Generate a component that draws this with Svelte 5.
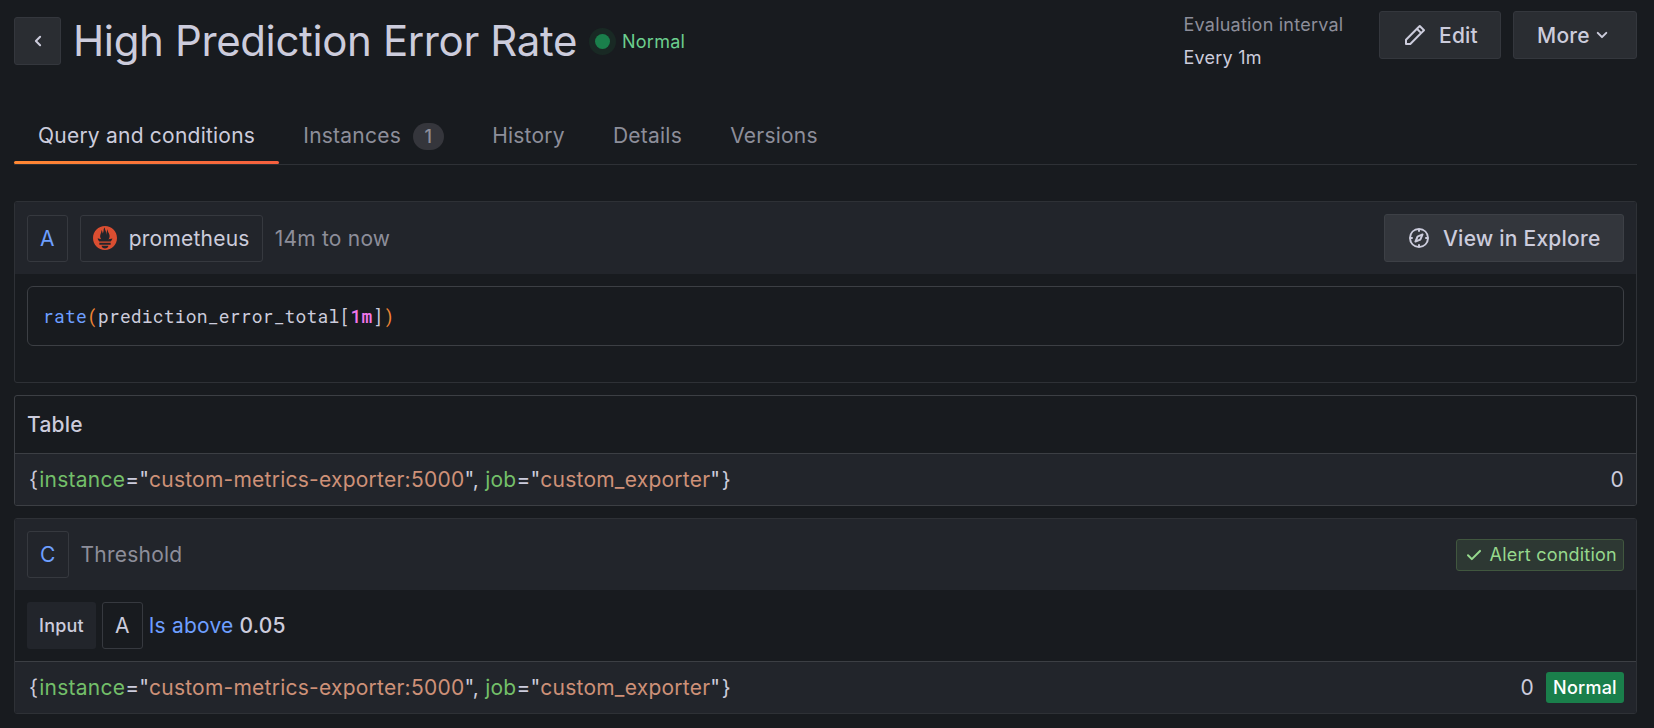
<script>
  const tabs = [
    { label: 'Query and conditions', active: true },
    { label: 'Instances', count: 1 },
    { label: 'History' },
    { label: 'Details' },
    { label: 'Versions' }
  ];
  const labels = [
    ['instance', 'custom-metrics-exporter:5000'],
    ['job', 'custom_exporter']
  ];
  const icons = {
    left: 'M11.29,12l3.54-3.54a1,1,0,0,0,0-1.41,1,1,0,0,0-1.42,0L9.17,11.29a1,1,0,0,0,0,1.42L13.41,17a1,1,0,0,0,.71.29,1,1,0,0,0,.71-.29,1,1,0,0,0,0-1.41Z',
    down: 'M17,9.17a1,1,0,0,0-1.41,0L12,12.71,8.46,9.17a1,1,0,0,0-1.41,0,1,1,0,0,0,0,1.42l4.24,4.24a1,1,0,0,0,1.42,0L17,10.59A1,1,0,0,0,17,9.17Z',
    pen: 'M22,7.24a1,1,0,0,0-.29-.71L17.47,2.29A1,1,0,0,0,16.76,2a1,1,0,0,0-.71.29L13.22,5.12h0L2.29,16.05a1,1,0,0,0-.29.71V21a1,1,0,0,0,1,1H7.24A1,1,0,0,0,8,21.71L18.87,10.78h0L21.71,8a1.19,1.19,0,0,0,.22-.33,1,1,0,0,0,0-.24.7.7,0,0,0,0-.14ZM6.83,20H4V17.17l9.93-9.93,2.83,2.83ZM18.17,8.66,15.34,5.83l1.42-1.41,2.82,2.82Z',
    check: 'M18.71,7.21a1,1,0,0,0-1.42,0L9.84,14.67,6.71,11.53A1,1,0,1,0,5.29,13l3.84,3.84a1,1,0,0,0,1.42,0l8.16-8.16A1,1,0,0,0,18.71,7.21Z',
    compass: 'M12,2A10,10,0,1,0,22,12,10,10,0,0,0,12,2Zm1,17.93V19a1,1,0,0,0-2,0v.93A8,8,0,0,1,4.07,13H5a1,1,0,0,0,0-2H4.07A8,8,0,0,1,11,4.07V5a1,1,0,0,0,2,0V4.07A8,8,0,0,1,19.93,11H19a1,1,0,0,0,0,2h.93A8,8,0,0,1,13,19.93ZM15.14,7.55l-5,2.12a1,1,0,0,0-.52.52l-2.12,5a1,1,0,0,0,.21,1.1,1,1,0,0,0,.7.3.93.93,0,0,0,.4-.09l5-2.12a1,1,0,0,0,.52-.52l2.12-5a1,1,0,0,0-1.31-1.31Zm-2.49,5.1-2.28,1,1-2.28,2.28-1Z',
    prometheus: 'M12 0C5.373 0 0 5.372 0 12c0 6.627 5.373 12 12 12s12-5.373 12-12c0-6.628-5.373-12-12-12zm0 22.46c-1.885 0-3.414-1.26-3.414-2.814h6.828c0 1.553-1.528 2.813-3.414 2.813zm5.64-3.745H6.36v-2.046h11.28v2.046zm-.04-3.098H6.391c-.037-.043-.075-.086-.111-.13-1.155-1.401-1.427-2.133-1.69-2.879-.005-.025 1.4.287 2.395.511 0 0 .513.119 1.262.255-.72-.843-1.147-1.915-1.147-3.01 0-2.406 1.845-4.508 1.18-6.207.648.053 1.34 1.367 1.387 3.422.689-.951.977-2.69.977-3.755 0-1.103.727-2.385 1.454-2.429-.648 1.069.168 1.984.894 4.256.272.854.237 2.29.447 3.201.07-1.892.395-4.652 1.595-5.605-.529 1.2.079 2.702.494 3.424.671 1.164 1.078 2.047 1.078 3.716a4.642 4.642 0 01-1.11 2.996c.792-.149 1.34-.283 1.34-.283l2.573-.502s-.374 1.538-1.81 3.019z'
  };
</script>

{#snippet icon(name)}
  <svg class="icon" viewBox="0 0 24 24" aria-hidden="true"><path d={icons[name]} /></svg>
{/snippet}

{#snippet series()}
  <div class="series"><span class="open">&#123;</span>{#each labels as [key, value], i}<span class="key">{key}</span><span>="</span><span class="val">{value}</span><span>"</span>{#if i < labels.length - 1}<span>{', '}</span>{/if}{/each}<span class="close">&#125;</span></div>
{/snippet}

<main>
  <header>
    <button class="btn back" aria-label="Back">{@render icon('left')}</button>
    <h1>High Prediction Error Rate</h1>
    <div class="state"><i></i>Normal</div>
    <dl>
      <dt>Evaluation interval</dt>
      <dd>Every 1m</dd>
    </dl>
    <button class="btn edit">{@render icon('pen')}<span>Edit</span></button>
    <button class="btn more"><span>More</span>{@render icon('down')}</button>
  </header>

  <nav>
    {#each tabs as tab}
      <a class:active={tab.active}>{tab.label}{#if tab.count}<span class="count">{tab.count}</span>{/if}</a>
    {/each}
  </nav>

  <section class="panel query">
    <div class="head">
      <span class="tag ref">A</span>
      <span class="tag source">{@render icon('prometheus')}prometheus</span>
      <span class="muted">14m to now</span>
      <button class="btn explore">{@render icon('compass')}<span>View in Explore</span></button>
    </div>
    <div class="editor"><code><span class="fn">rate</span><span class="paren">(</span>prediction_error_total[<span class="dur">1m</span>]<span class="paren">)</span></code></div>
  </section>

  <section class="panel table">
    <h2>Table</h2>
    <div class="row">{@render series()}<span class="num">0</span></div>
  </section>

  <section class="panel threshold">
    <div class="head">
      <span class="tag ref">C</span>
      <span class="muted">Threshold</span>
      <span class="condition">{@render icon('check')}Alert condition</span>
    </div>
    <div class="expr">
      <span class="input">Input</span>
      <span class="tag">A</span>
      <span class="op">Is above</span>
      <span class="limit">0.05</span>
    </div>
    <div class="row">{@render series()}<span class="num">0</span><span class="normal">Normal</span></div>
  </section>
</main>

<style>
  :global(body) {
    background: #181b1f;
  }
  main {
    box-sizing: border-box;
    height: 728px;
    padding: 11px 17px 0 14px;
    font: 21px/33px Inter, sans-serif;
    letter-spacing: 0.225px;
    color: #ccccdc;
    overflow: hidden;
  }
  main * {
    box-sizing: border-box;
  }
  .icon {
    width: 24px;
    height: 24px;
    flex: none;
    fill: currentColor;
  }
  header {
    display: flex;
    align-items: flex-start;
    height: 107px;
  }
  .btn {
    display: flex;
    align-items: center;
    height: 48px;
    padding: 0 23px;
    border: 1px solid #34373d;
    border-radius: 3px;
    background: #2a2d32;
    color: inherit;
    font: 500 21px/33px Inter, sans-serif;
    letter-spacing: 0.225px;
    white-space: nowrap;
  }
  .back {
    width: 47px;
    padding: 0;
    margin: 6px 12px 0 0;
    justify-content: center;
  }
  h1 {
    margin: 5px 0 0;
    font-size: 42px;
    line-height: 50px;
    font-weight: 400;
    letter-spacing: -0.37px;
    white-space: nowrap;
  }
  .state {
    display: flex;
    align-items: center;
    margin: 14px 0 0 18px;
    height: 33px;
    font-size: 18px;
    color: #6ccf8e;
  }
  .state i {
    width: 15px;
    height: 15px;
    margin-right: 12px;
    border-radius: 50%;
    background: #1a7f4b;
    box-shadow: 0 0 0 6px #192924;
  }
  dl {
    width: 160px;
    margin: -3px 35.5px 0 auto;
    font-size: 18px;
    white-space: nowrap;
  }
  dt {
    color: #8d8e9a;
  }
  dd {
    margin: 0;
  }
  .edit {
    width: 122px;
    gap: 12px;
  }
  .more {
    width: 124px;
    margin-left: 12px;
  }
  nav {
    display: flex;
    height: 47px;
    border-bottom: 1px solid #2e3136;
  }
  nav a {
    position: relative;
    display: flex;
    align-items: center;
    height: 35px;
    padding: 0 24.2px 0 24px;
    color: #8d8e9a;
    white-space: nowrap;
  }
  nav .active {
    color: #ccccdc;
  }
  nav .active::after {
    content: '';
    position: absolute;
    left: 0;
    right: 0;
    top: 43px;
    height: 3px;
    border-radius: 2px;
    background: linear-gradient(90deg, #ff8833, #f55f3e);
  }
  .count {
    width: 31px;
    height: 27px;
    margin: 1px 0 0 12px;
    border-radius: 14px;
    background: #35363c;
    font-size: 18px;
    font-weight: 500;
    line-height: 27px;
    text-align: center;
  }
  .panel {
    border: 1px solid #2e3136;
    border-radius: 3px;
    overflow: hidden;
  }
  .query {
    height: 182px;
    margin-top: 36px;
  }
  .head {
    display: flex;
    align-items: center;
    gap: 12px;
    height: 72px;
    padding: 0 12px;
    background: #22252b;
    white-space: nowrap;
  }
  .tag {
    display: flex;
    align-items: center;
    height: 47px;
    padding: 0 12px;
    border: 1px solid #36393f;
    border-radius: 3px;
  }
  .ref {
    color: #6e9fff;
  }
  .source .icon {
    margin-right: 12px;
    fill: #da4e31;
  }
  .muted {
    color: #8d8e9a;
  }
  .explore {
    width: 240px;
    margin-left: auto;
    padding-left: 22px;
    gap: 12px;
    background: #33363c;
    border-color: #3d4046;
  }
  .editor {
    display: flex;
    align-items: center;
    height: 60px;
    margin: 12px;
    padding: 0 15px;
    border: 1px solid #3c3f44;
    border-radius: 6px;
  }
  code {
    font: 18px/27px 'Roboto Mono', 'DejaVu Sans Mono', monospace;
    letter-spacing: 0.18px;
  }
  .fn {
    color: #6e9fff;
  }
  .paren {
    color: #f08534;
  }
  .dur {
    color: #f277e9;
    font-weight: 500;
  }
  .table {
    height: 111px;
    margin-top: 12px;
    border-color: #3c3f44;
  }
  h2 {
    height: 57px;
    margin: 0;
    padding: 0 12px;
    font-size: 21px;
    font-weight: 500;
    line-height: 57px;
  }
  .row {
    display: flex;
    align-items: center;
    height: 52px;
    padding: 0 12px 0 14px;
    border-top: 1px solid #3c3f44;
    background: #22252b;
  }
  .series {
    margin-right: auto;
    letter-spacing: 0.24px;
    white-space: pre;
  }
  .open {
    margin-right: 1px;
  }
  .close {
    margin-left: 1.5px;
  }
  .key {
    color: #73bf69;
  }
  .val {
    color: #ce9178;
  }
  .threshold {
    height: 196px;
    margin-top: 12px;
  }
  .threshold .head {
    height: 71px;
  }
  .condition {
    display: flex;
    align-items: center;
    gap: 4px;
    width: 168px;
    height: 32px;
    margin-left: auto;
    padding-left: 4.5px;
    border: 1px solid #41573f;
    border-radius: 3px;
    background: #2d3833;
    color: #96d98d;
    font-size: 18px;
  }
  .expr {
    display: flex;
    align-items: center;
    gap: 6px;
    height: 71px;
    padding: 0 12px;
  }
  .input {
    height: 47px;
    padding: 0 12px;
    border-radius: 3px;
    background: #22252b;
    font-size: 18px;
    font-weight: 500;
    line-height: 47px;
  }
  .op {
    color: #6e9fff;
  }
  .limit {
    font-weight: 500;
  }
  .normal {
    width: 78px;
    height: 31px;
    margin-left: 12px;
    border-radius: 3px;
    background: #1a7f4b;
    color: #fff;
    font-size: 18px;
    font-weight: 500;
    line-height: 31px;
    text-align: center;
  }
</style>
